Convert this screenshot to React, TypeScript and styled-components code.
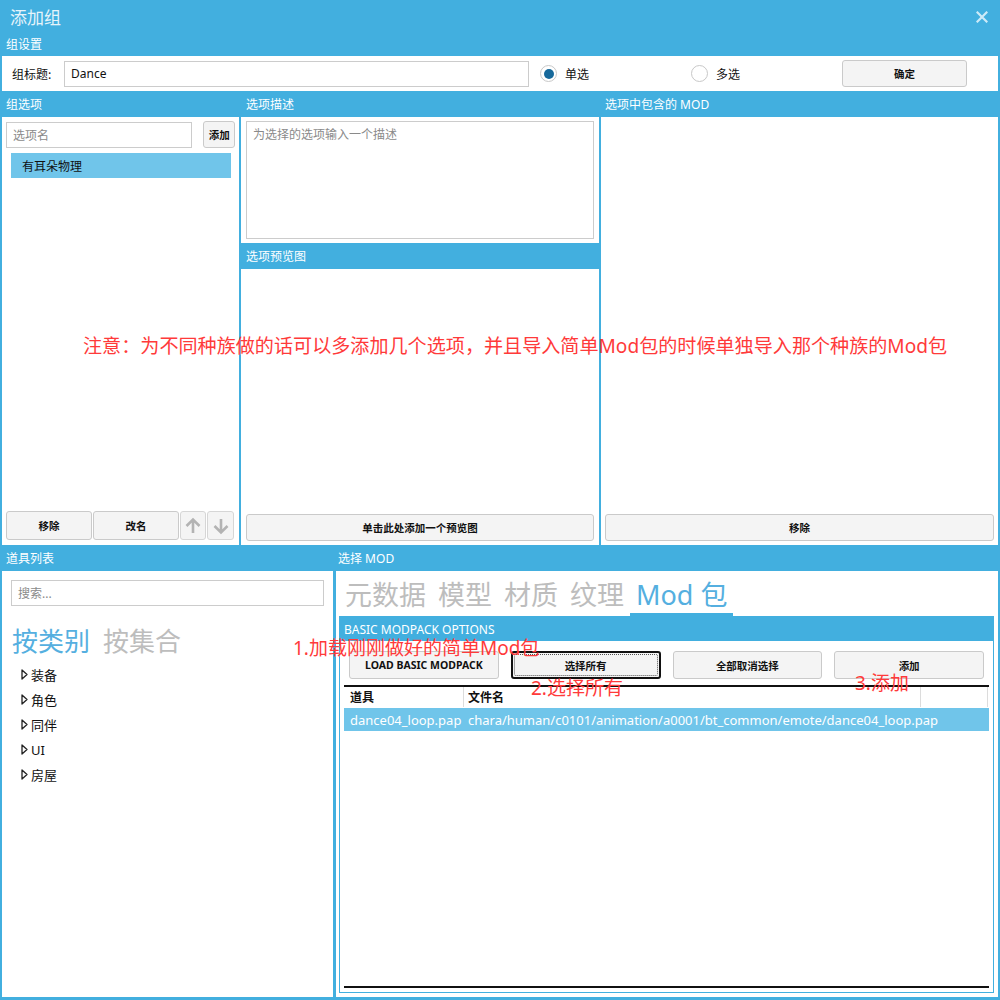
import React from "react";
import styled, { createGlobalStyle } from "styled-components";

const BLUE = "#42afdf";
const SEL = "#70c5ea";

const Global = createGlobalStyle`
  html, body { margin: 0; padding: 0; background: ${BLUE}; }
  body { font-family: "Noto Sans", "Noto Sans CJK SC", sans-serif; }
  * { box-sizing: border-box; }
`;

const Window = styled.div`
  position: relative;
  width: 1000px;
  height: 1000px;
  background: ${BLUE};
  display: flex;
  flex-direction: column;
  overflow: hidden;
  font-family: "Noto Sans", "Noto Sans CJK SC", sans-serif;
`;

const TitleBar = styled.div`
  height: 33px;
  display: flex;
  align-items: center;
  justify-content: space-between;
  padding: 0 12px 0 10px;
`;

const Title = styled.div`
  color: #e6f4fb;
  font-size: 17px;
  line-height: 20px;
  font-family: "Noto Sans CJK SC", sans-serif;
`;

const SectionHeader = styled.div<{ $pad?: number }>`
  height: 23px;
  display: flex;
  align-items: center;
  padding-left: ${(p) => p.$pad ?? 6}px;
  color: #fff;
  font-size: 12px;
  line-height: 16px;
  font-family: "Noto Sans", "Noto Sans CJK SC", sans-serif;
`;

const ColHeader = styled.div<{ $pad?: number }>`
  height: 26px;
  flex: 0 0 26px;
  display: flex;
  align-items: center;
  padding-left: ${(p) => p.$pad ?? 4}px;
  padding-top: 1px;
  color: #fff;
  font-size: 12px;
  line-height: 16px;
  font-family: "Noto Sans", "Noto Sans CJK SC", sans-serif;
`;

const SettingsPanel = styled.div`
  margin: 0 2px;
  height: 35px;
  background: #fff;
  display: flex;
  align-items: center;
  padding-left: 10px;
`;

const Label = styled.div`
  width: 52px;
  font-size: 12px;
  color: #111;
  font-family: "Noto Sans CJK SC", sans-serif;
`;

const TextInput = styled.div<{ $w?: number; $h?: number; $placeholder?: boolean }>`
  width: ${(p) => (p.$w ? `${p.$w}px` : "100%")};
  height: ${(p) => p.$h ?? 26}px;
  border: 1px solid #cccccc;
  background: #fff;
  display: flex;
  align-items: center;
  padding-left: 6px;
  font-size: 12px;
  color: ${(p) => (p.$placeholder ? "#8a8a8a" : "#111")};
  font-family: "Noto Sans", "Noto Sans CJK SC", sans-serif;
`;

const RadioGroup = styled.div<{ $w: number; $offset?: number }>`
  width: ${(p) => p.$w}px;
  margin-left: ${(p) => p.$offset ?? 0}px;
  display: flex;
  align-items: center;
  gap: 8px;
  font-size: 12px;
  color: #111;
  font-family: "Noto Sans CJK SC", sans-serif;
`;

const RadioCircle = styled.div<{ $checked?: boolean }>`
  width: 17px;
  height: 17px;
  border-radius: 50%;
  border: 1px solid #c8c8c8;
  background: #fff;
  display: flex;
  align-items: center;
  justify-content: center;
  &::after {
    content: "";
    display: ${(p) => (p.$checked ? "block" : "none")};
    width: 10px;
    height: 10px;
    border-radius: 50%;
    background: #17699b;
  }
`;

const Button = styled.div<{ $w?: number; $h?: number; $focus?: boolean }>`
  width: ${(p) => (p.$w ? `${p.$w}px` : "100%")};
  height: ${(p) => p.$h ?? 27}px;
  background: #f4f4f4;
  border: ${(p) => (p.$focus ? "2px solid #111" : "1px solid #cacaca")};
  border-radius: 3px;
  display: flex;
  align-items: center;
  justify-content: center;
  font-size: 10.5px;
  font-weight: 700;
  color: #111;
  font-family: "Noto Sans", "Noto Sans CJK SC", sans-serif;
  position: relative;
  white-space: nowrap;
  ${(p) =>
    p.$focus
      ? `&::after { content: ""; position: absolute; inset: 1px; border: 1px dotted #555; border-radius: 2px; }`
      : ""}
`;

const MiddleGrid = styled.div`
  height: 454px;
  display: grid;
  grid-template-columns: 237px 358px 1fr;
  column-gap: 2px;
  padding: 0 2px;
`;

const Column = styled.div`
  display: flex;
  flex-direction: column;
  min-height: 0;
  min-width: 0;
`;

const Body = styled.div<{ $h?: number; $padX?: number }>`
  background: #fff;
  ${(p) => (p.$h ? `flex: 0 0 ${p.$h}px;` : "flex: 1;")}
  display: flex;
  flex-direction: column;
  padding: 4px ${(p) => p.$padX ?? 4}px;
  min-height: 0;
`;

const InputRow = styled.div`
  display: flex;
  align-items: center;
  gap: 11px;
`;

const ListItem = styled.div<{ $selected?: boolean }>`
  margin: 5px 4px 0 5px;
  height: 25px;
  display: flex;
  align-items: center;
  padding-left: 11px;
  background: ${(p) => (p.$selected ? SEL : "transparent")};
  font-size: 12px;
  color: #111;
  font-family: "Noto Sans CJK SC", sans-serif;
`;

const Spacer = styled.div`
  flex: 1;
`;

const BottomButtons = styled.div`
  display: grid;
  grid-template-columns: 86px 86px 26px 27px;
  gap: 1px;
  margin-bottom: 1px;
`;

const IconButton = styled.div`
  height: 29px;
  background: #f4f4f4;
  border: 1px solid #d6d6d6;
  border-radius: 3px;
  display: flex;
  align-items: center;
  justify-content: center;
`;

const TextArea = styled.div`
  flex: 1;
  border: 1px solid #cccccc;
  padding: 3px 6px;
  font-size: 12px;
  color: #8a8a8a;
  font-family: "Noto Sans CJK SC", sans-serif;
`;

const BottomGrid = styled.div`
  height: 455px;
  display: grid;
  grid-template-columns: 331px minmax(0, 1fr);
  column-gap: 3px;
  padding: 0 2px 3px;
`;

const LeftBody = styled.div`
  flex: 1;
  background: #fff;
  padding: 9px 9px 0 9px;
  display: flex;
  flex-direction: column;
`;

const CategoryRow = styled.div`
  margin-top: 17px;
  display: flex;
  gap: 13px;
  padding-left: 1px;
`;

const BigTab = styled.div<{ $active?: boolean }>`
  font-size: 26px;
  line-height: 34px;
  color: ${(p) => (p.$active ? "#55afe0" : "#bdbdbd")};
  font-family: "Noto Sans CJK SC", sans-serif;
`;

const Tree = styled.div`
  margin-top: 5px;
  display: flex;
  flex-direction: column;
`;

const TreeRow = styled.div`
  height: 25px;
  display: flex;
  align-items: center;
  gap: 3px;
  padding-left: 10px;
  font-size: 13px;
  color: #111;
  font-family: "Noto Sans", "Noto Sans CJK SC", sans-serif;
`;

const RightBody = styled.div`
  flex: 1;
  background: #fff;
  padding: 0 4px 4px 3px;
  display: flex;
  flex-direction: column;
  min-height: 0;
  min-width: 0;
`;

const TabRow = styled.div`
  display: flex;
  padding-top: 6px;
`;

const ModTab = styled.div<{ $active?: boolean }>`
  padding: 0 6px;
  font-size: 27px;
  line-height: 36px;
  color: ${(p) => (p.$active ? "#55afe0" : "#bdbdbd")};
  border-bottom: 3px solid ${(p) => (p.$active ? BLUE : "transparent")};
  font-family: "Noto Sans", "Noto Sans CJK SC", sans-serif;
  white-space: nowrap;
`;

const InnerPanel = styled.div`
  flex: 1;
  border: 1px solid ${BLUE};
  display: flex;
  flex-direction: column;
  min-height: 0;
  min-width: 0;
`;

const InnerHeader = styled.div`
  height: 24px;
  background: ${BLUE};
  color: #fff;
  font-size: 12px;
  display: flex;
  align-items: center;
  padding-left: 4px;
  font-family: "Noto Sans", sans-serif;
`;

const ButtonRow = styled.div`
  display: grid;
  grid-template-columns: repeat(4, minmax(0, 1fr));
  column-gap: 12px;
  padding: 10px 9px 0 9px;
`;

const Table = styled.div`
  flex: 1;
  margin: 6px 4px 4px 4px;
  border-top: 2px solid #111;
  border-bottom: 2px solid #111;
  display: flex;
  flex-direction: column;
  overflow: hidden;
`;

const TableRow = styled.div<{ $header?: boolean; $selected?: boolean }>`
  display: grid;
  grid-template-columns: 119px 457px 67px minmax(0, 1fr);
  height: ${(p) => (p.$header ? 20 : 23)}px;
  margin-top: ${(p) => (p.$header ? 0 : 1)}px;
  background: ${(p) => (p.$selected ? SEL : "transparent")};
  align-items: center;
  font-size: ${(p) => (p.$header ? 12 : 13)}px;
  font-weight: ${(p) => (p.$header ? 700 : 400)};
  color: ${(p) => (p.$header ? "#111" : "#fff")};
  font-family: "Noto Sans", "Noto Sans CJK SC", sans-serif;
`;

const Cell = styled.div<{ $divider?: boolean; $pad?: number }>`
  height: 100%;
  display: flex;
  align-items: center;
  padding-left: ${(p) => p.$pad ?? (p.$divider ? 4 : 6)}px;
  border-left: ${(p) => (p.$divider ? "1px solid #dcdcdc" : "none")};
  white-space: nowrap;
  overflow: visible;
`;

const Note = styled.div<{ $x: number; $y: number; $size?: number }>`
  position: absolute;
  left: ${(p) => p.$x}px;
  top: ${(p) => p.$y}px;
  color: #ff3a3a;
  font-size: ${(p) => p.$size ?? 19}px;
  line-height: 24px;
  white-space: nowrap;
  font-family: "Noto Sans", "Noto Sans CJK SC", sans-serif;
`;

const CloseIcon = () => (
  <svg width="12" height="12" viewBox="0 0 12 12">
    <path d="M1.5 1.5 L10.5 10.5 M10.5 1.5 L1.5 10.5" stroke="#cdeaf8" strokeWidth="2.2" strokeLinecap="square" />
  </svg>
);

const Arrow = ({ up }: { up?: boolean }) => (
  <svg width="18" height="18" viewBox="0 0 18 18">
    <g transform={up ? "" : "rotate(180 9 9)"}>
      <path d="M9 16 V3 M2.5 9 L9 2.5 L15.5 9" stroke="#b3b3b3" strokeWidth="2.6" fill="none" strokeLinecap="butt" />
    </g>
  </svg>
);

const Caret = () => (
  <svg width="7" height="11" viewBox="0 0 7 11">
    <path d="M1 1 L6 5.5 L1 10 Z" fill="none" stroke="#222" strokeWidth="1.3" strokeLinejoin="round" />
  </svg>
);

export default function App() {
  return (
    <>
      <Global />
      <Window>
        <TitleBar>
          <Title>添加组</Title>
          <CloseIcon />
        </TitleBar>
        <SectionHeader>组设置</SectionHeader>
        <SettingsPanel>
          <Label>组标题:</Label>
          <TextInput $w={465}>Dance</TextInput>
          <RadioGroup $w={151} $offset={11}>
            <RadioCircle $checked />
            单选
          </RadioGroup>
          <RadioGroup $w={151}>
            <RadioCircle />
            多选
          </RadioGroup>
          <Button $w={125} $h={27}>确定</Button>
        </SettingsPanel>

        <MiddleGrid>
          <Column>
            <ColHeader>组选项</ColHeader>
            <Body>
              <InputRow>
                <TextInput $w={188} $h={26} $placeholder>选项名</TextInput>
                <Button $w={32} $h={27}>添加</Button>
              </InputRow>
              <ListItem $selected>有耳朵物理</ListItem>
              <Spacer />
              <BottomButtons>
                <Button $h={29}>移除</Button>
                <Button $h={29}>改名</Button>
                <IconButton><Arrow up /></IconButton>
                <IconButton><Arrow /></IconButton>
              </BottomButtons>
            </Body>
          </Column>
          <Column>
            <ColHeader $pad={5}>选项描述</ColHeader>
            <Body $h={126} $padX={5}>
              <TextArea>为选择的选项输入一个描述</TextArea>
            </Body>
            <ColHeader $pad={5}>选项预览图</ColHeader>
            <Body $padX={5}>
              <Spacer />
              <Button $h={27}>单击此处添加一个预览图</Button>
            </Body>
          </Column>
          <Column>
            <ColHeader>选项中包含的 MOD</ColHeader>
            <Body>
              <Spacer />
              <Button $h={27}>移除</Button>
            </Body>
          </Column>
        </MiddleGrid>

        <BottomGrid>
          <Column>
            <ColHeader>道具列表</ColHeader>
            <LeftBody>
              <TextInput $h={26} $placeholder>搜索...</TextInput>
              <CategoryRow>
                <BigTab $active>按类别</BigTab>
                <BigTab>按集合</BigTab>
              </CategoryRow>
              <Tree>
                {["装备", "角色", "同伴", "UI", "房屋"].map((t) => (
                  <TreeRow key={t}>
                    <Caret />
                    {t}
                  </TreeRow>
                ))}
              </Tree>
            </LeftBody>
          </Column>
          <Column>
            <ColHeader $pad={2}>选择 MOD</ColHeader>
            <RightBody>
              <TabRow>
                <ModTab>元数据</ModTab>
                <ModTab>模型</ModTab>
                <ModTab>材质</ModTab>
                <ModTab>纹理</ModTab>
                <ModTab $active>Mod 包</ModTab>
              </TabRow>
              <InnerPanel>
                <InnerHeader>BASIC MODPACK OPTIONS</InnerHeader>
                <ButtonRow>
                  <Button $h={28}>LOAD BASIC MODPACK</Button>
                  <Button $h={28} $focus>选择所有</Button>
                  <Button $h={28}>全部取消选择</Button>
                  <Button $h={28}>添加</Button>
                </ButtonRow>
                <Table>
                  <TableRow $header>
                    <Cell>道具</Cell>
                    <Cell $divider>文件名</Cell>
                    <Cell $divider />
                    <Cell $divider />
                  </TableRow>
                  <TableRow $selected>
                    <Cell>dance04_loop.pap</Cell>
                    <Cell $pad={5}>chara/human/c0101/animation/a0001/bt_common/emote/dance04_loop.pap</Cell>
                    <Cell />
                    <Cell />
                  </TableRow>
                </Table>
              </InnerPanel>
            </RightBody>
          </Column>
        </BottomGrid>

        <Note $x={83} $y={334} $size={19.1}>
          注意：为不同种族做的话可以多添加几个选项，并且导入简单Mod包的时候单独导入那个种族的Mod包
        </Note>
        <Note $x={293} $y={636}>1.加载刚刚做好的简单Mod包</Note>
        <Note $x={531} $y={676}>2.选择所有</Note>
        <Note $x={855} $y={671}>3.添加</Note>
      </Window>
    </>
  );
}
